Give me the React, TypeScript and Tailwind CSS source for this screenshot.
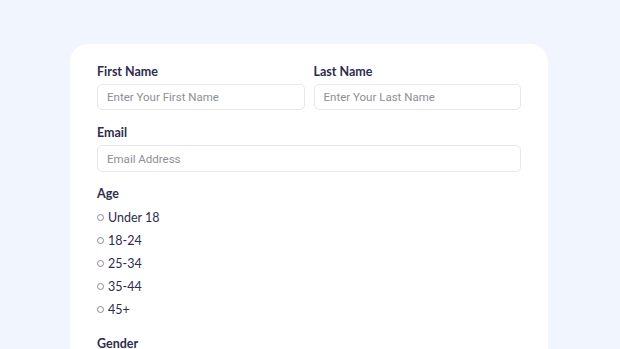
const ages = ["Under 18", "18-24", "25-34", "35-44", "45+"];

const labelCls = "block text-[12.5px] leading-[17px] font-bold text-[#2e2c4f]";
const inputCls =
  "w-full rounded-[5px] border border-[#e6e8ee] bg-white px-[9px] text-[11.5px] text-[#2e2c4f] placeholder:text-[#8e8e98] outline-none";

const inputFont = { fontFamily: "Roboto, 'Liberation Sans', sans-serif" };

const App = () => {
  return (
    <div className="w-full h-[349px] overflow-hidden bg-[#f1f5fe] pt-[44px] pl-[70px]">
      <div
        className="w-[478px] h-[400px] rounded-[18px] bg-white px-[27px] pt-[19px]"
        style={{ fontFamily: "Lato, 'Noto Sans', sans-serif" }}
      >
        <div className="flex gap-[9px]">
          <div className="flex-1">
            <label className={labelCls}>First Name</label>
            <input
              type="text"
              placeholder="Enter Your First Name"
              className={`${inputCls} mt-[4px] h-[26px]`}
              style={inputFont}
            />
          </div>
          <div className="flex-1">
            <label className={labelCls}>Last Name</label>
            <input
              type="text"
              placeholder="Enter Your Last Name"
              className={`${inputCls} mt-[4px] h-[26px]`}
              style={inputFont}
            />
          </div>
        </div>

        <div className="mt-[14px]">
          <label className={labelCls}>Email</label>
          <input
            type="email"
            placeholder="Email Address"
            className={`${inputCls} mt-[4px] h-[27px]`}
            style={inputFont}
          />
        </div>

        <div className="mt-[13px]">
          <label className={labelCls}>Age</label>
          <div className="mt-[5px] flex flex-col">
            {ages.map((a) => (
              <label key={a} className="flex h-[23px] items-center gap-[4px] text-[12.5px] leading-none text-[#2e2c4f]">
                <span className="mb-[2px] h-[7px] w-[7px] rounded-full border border-[#8a8a94]" />
                <span>{a}</span>
              </label>
            ))}
          </div>
        </div>

        <div className="mt-[13px]">
          <label className={labelCls}>Gender</label>
        </div>
      </div>
    </div>
  );
};

export default App;
